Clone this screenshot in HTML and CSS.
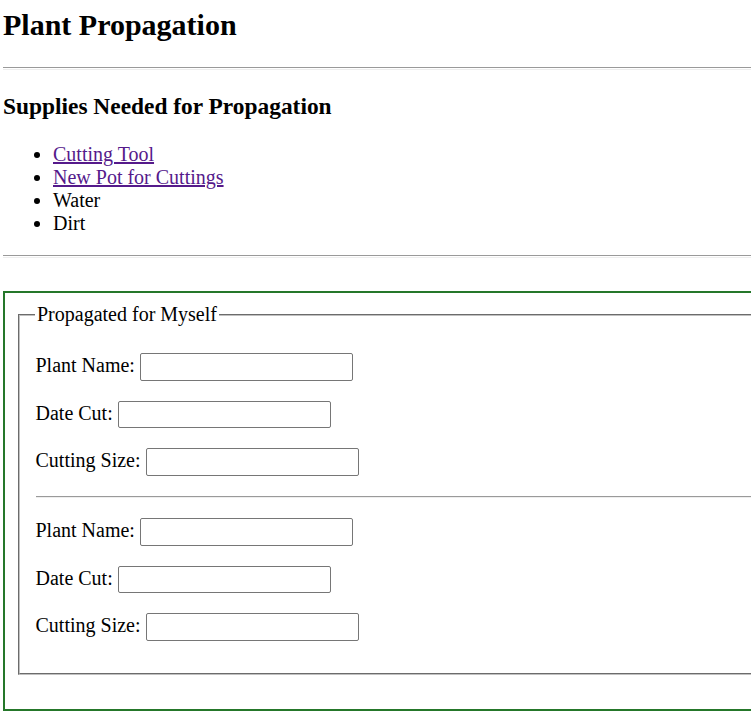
FILE: index.html
```html
<!DOCTYPE html>
<html lang="en">
<head>
<meta charset="utf-8">
<title>Plant Propagation</title>
<link rel="stylesheet" href="styles.css">
</head>
<body>
<h1 class="title">Plant Propagation</h1>
<hr class="rule">
<h2 class="subtitle">Supplies Needed for Propagation</h2>
<ul class="supplies">
  <li><a class="link" href="#cutting-tool">Cutting Tool</a></li>
  <li><a class="link" href="#new-pot">New Pot for Cuttings</a></li>
  <li>Water</li>
  <li>Dirt</li>
</ul>
<hr class="rule">
<form class="log">
  <fieldset class="group">
    <legend class="group-title">Propagated for Myself</legend>
    <p class="field"><label class="field-label">Plant Name:</label> <input class="field-input" type="text"></p>
    <p class="field"><label class="field-label">Date Cut:</label> <input class="field-input" type="text"></p>
    <p class="field"><label class="field-label">Cutting Size:</label> <input class="field-input" type="text"></p>
    <hr class="rule">
    <p class="field"><label class="field-label">Plant Name:</label> <input class="field-input" type="text"></p>
    <p class="field"><label class="field-label">Date Cut:</label> <input class="field-input" type="text"></p>
    <p class="field"><label class="field-label">Cutting Size:</label> <input class="field-input" type="text"></p>
  </fieldset>
</form>
</body>
</html>
```
FILE: styles.css
```css
html {
  overflow: hidden;
  background: #ffffff;
}

body {
  margin: 0 0 0 3px;
  width: 800px;
  font-family: "Liberation Serif", "Times New Roman", serif;
  font-size: 20px;
  line-height: 23px;
  color: #000000;
}

.title {
  font-size: 30px;
  font-weight: bold;
  line-height: 34.5px;
  margin: 7.9px 0 24.9px;
}

.rule {
  display: block;
  height: 0.5px;
  border: 0;
  border-top: 1px solid #9a9a9a;
  border-bottom: 1px solid #eeeeee;
  margin: 10px 0;
}

.subtitle {
  font-size: 23.4px;
  font-weight: bold;
  line-height: 26.9px;
  margin: 23.4px 0;
}

.supplies {
  margin: 20px 0;
  padding-left: 50px;
}

.link {
  color: #551a8b;
  text-decoration: underline;
}

.log {
  margin: 33.5px 0 0;
  padding: 10px 10px 33.5px;
  border: 2px solid #25772a;
}

.group {
  margin: 0 2.5px;
  padding: 7px 15px 12.5px 16px;
  border: 2px groove #c0c0c0;
  min-width: 0;
}

.group-title {
  padding: 0 2.5px;
  margin-left: -1px;
  line-height: 23px;
}

.field {
  margin: 20px 0;
  line-height: 23px;
}

.field-label {
  font: inherit;
}

.field-input {
  box-sizing: border-box;
  width: 213px;
  height: 27.5px;
  margin: 0;
  padding: 0 3px;
  border: 1px solid #767676;
  border-radius: 2px;
  background: #ffffff;
  font-family: "Liberation Sans", Arial, sans-serif;
  font-size: 16.67px;
  vertical-align: baseline;
}
```
